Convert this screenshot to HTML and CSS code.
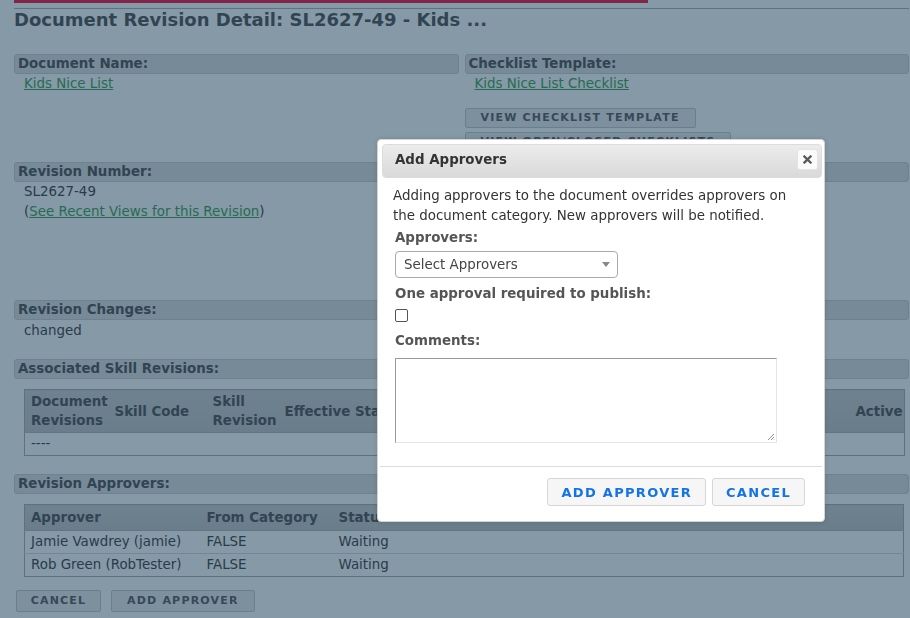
FILE: index.html
```html
<!DOCTYPE html>
<html>
<head>
<meta charset="utf-8">
<title>Document Revision Detail</title>
<link rel="stylesheet" href="styles.css">
</head>
<body>
<div class="page">
  <div class="topbar"><div class="accent"></div></div>
  <h1 class="title">Document Revision Detail: SL2627-49 - Kids ...</h1>

  <div class="grid">
    <div class="cell">
      <div class="bar">Document Name:</div>
      <div class="content"><a href="#">Kids Nice List</a></div>
    </div>
    <div class="cell">
      <div class="bar">Checklist Template:</div>
      <div class="content"><a href="#">Kids Nice List Checklist</a></div>
      <div class="btns-col">
        <button class="pbtn">View Checklist Template</button>
        <button class="pbtn">View Open/Closed Checklists</button>
      </div>
    </div>
    <div class="cell">
      <div class="bar">Revision Number:</div>
      <div class="content">SL2627-49<br>(<a href="#">See Recent Views for this Revision</a>)</div>
    </div>
    <div class="cell tall">
      <div class="bar">Revision Status:</div>
      <div class="content">Pending Approval<br>Created: 11/02/2023<br>Effective: 11/02/2023<br>Author: Jamie Vawdrey</div>
    </div>
  </div>

  <div class="section changes">
    <div class="bar">Revision Changes:</div>
    <div class="content">changed</div>
  </div>

  <div class="section">
    <div class="bar">Associated Skill Revisions:</div>
    <table class="tbl skills">
      <colgroup><col style="width:84px"><col style="width:98px"><col style="width:72px"><col style="width:190px"><col style="width:190px"><col style="width:191px"><col style="width:55px"></colgroup>
      <thead><tr><th>Document Revisions</th><th>Skill Code</th><th>Skill Revision</th><th>Effective Start</th><th>Effective End</th><th>Status</th><th>Active</th></tr></thead>
      <tbody><tr><td>----</td><td></td><td></td><td></td><td></td><td></td><td></td></tr></tbody>
    </table>
  </div>

  <div class="section">
    <div class="bar">Revision Approvers:</div>
    <table class="tbl approvers">
      <colgroup><col style="width:176px"><col style="width:132px"><col style="width:180px"><col></colgroup>
      <thead><tr><th>Approver</th><th>From Category</th><th>Status</th><th>Date</th></tr></thead>
      <tbody>
        <tr><td>Jamie Vawdrey (jamie)</td><td>FALSE</td><td>Waiting</td><td></td></tr>
        <tr><td>Rob Green (RobTester)</td><td>FALSE</td><td>Waiting</td><td></td></tr>
      </tbody>
    </table>
  </div>

  <div class="actions">
    <button class="pbtn">Cancel</button>
    <button class="pbtn">Add Approver</button>
  </div>
</div>

<div class="overlay"></div>

<div class="dialog">
  <div class="dlg-title">
    <span>Add Approvers</span>
    <button class="close" aria-label="close">
      <svg width="9" height="9" viewBox="0 0 9 9"><path d="M1.5 1.5 L7.5 7.5 M7.5 1.5 L1.5 7.5" stroke="#5a5a5a" stroke-width="2.3" stroke-linecap="square"/></svg>
    </button>
  </div>
  <div class="dlg-body">
    <p class="intro">Adding approvers to the document overrides approvers on the document category. New approvers will be notified.</p>
    <div class="form">
      <label class="lbl">Approvers:</label>
      <div class="select"><span>Select Approvers</span><span class="caret"></span></div>
      <label class="lbl">One approval required to publish:</label>
      <div class="check"></div>
      <label class="lbl">Comments:</label>
      <div class="textarea"><svg class="grip" width="8" height="8" viewBox="0 0 8 8"><path d="M7 1 L1 7 M7 4 L4 7 M7 6.5 L6.5 7" stroke="#777" stroke-width="0.8"/></svg></div>
    </div>
  </div>
  <div class="dlg-foot">
    <button class="dbtn">Add Approver</button>
    <button class="dbtn">Cancel</button>
  </div>
</div>
</body>
</html>
```
FILE: styles.css
```css
html, body { margin: 0; padding: 0; background: #fff; }
body {
  font-family: "DejaVu Sans", Verdana, sans-serif;
  font-size: 13.4px;
  color: #444;
  width: 910px;
  height: 618px;
  overflow: hidden;
}
a { color: #3fa254; text-decoration: underline; }

.page { padding: 0 1px 0 14px; }
.topbar { border-bottom: 1px solid #b0b0b0; height: 8px; }
.accent { width: 634px; height: 3px; background: #f31543; }
.title {
  margin: -1px 0 0;
  font-size: 18px;
  line-height: 24px;
  font-weight: bold;
  color: #555;
}

.grid {
  margin-top: 22px;
  display: grid;
  grid-template-columns: 1fr 1fr;
  column-gap: 6px;
  row-gap: 10px;
}
.cell.tall { min-height: 129px; }
.bar {
  height: 18px;
  line-height: 18px;
  border: 1px solid #cfcfcf;
  border-radius: 3px;
  background: #e0e0e0;
  padding-left: 3px;
  font-weight: bold;
  color: #555;
}
.content { padding-left: 10px; line-height: 20px; }
.btns-col { display: flex; flex-direction: column; align-items: flex-start; gap: 4px; margin-top: 14px; }

.pbtn {
  font-family: "DejaVu Sans", Verdana, sans-serif;
  font-size: 11px;
  font-weight: bold;
  text-transform: uppercase;
  letter-spacing: 1.2px;
  color: #5e5e5e;
  background: #ececec;
  border: 1px solid #c8c8c8;
  border-radius: 2px;
  height: 20px;
  padding: 0 15px;
  line-height: 18px;
}

.section { margin-top: 18px; }
.grid + .section { margin-top: 9px; }
.changes .content { padding-top: 1px; }

.tbl {
  margin: 10px 0 0 10px;
  width: 880px;
  table-layout: fixed;
  border-collapse: collapse;
  border: 1px solid #afafaf;
}
.tbl th {
  background: linear-gradient(#d0d0d0, #c6c6c6);
  text-align: left;
  font-weight: bold;
  color: #555;
  padding: 2px 1px 2px 6px;
  line-height: 19px;
  border-bottom: 1px solid #b8b8b8;
}
.tbl td { padding: 0 1px 0 6px; height: 22px; line-height: 20px; border-top: 1px solid #d8d8d8; }
.skills th { height: 35px; }
.approvers th { height: 21px; }

.actions { display: flex; gap: 10px; margin: 13px 0 0 2px; }
.actions .pbtn { height: 22px; padding: 0 15px; }
.actions .pbtn:first-child { width: 85px; padding: 0; }

.overlay {
  position: fixed;
  inset: 0;
  background: rgba(13, 51, 77, 0.5);
}

.dialog {
  position: fixed;
  left: 377px;
  top: 139px;
  width: 448px;
  height: 383px;
  box-sizing: border-box;
  background: #fff;
  border: 1px solid #d4d4d4;
  border-radius: 4px;
  padding: 4px 2px 0 4px;
  box-shadow: 0 0 4px rgba(0,0,0,0.15);
}
.dlg-title {
  height: 29px;
  display: flex;
  align-items: center;
  justify-content: space-between;
  padding: 0 3px 3px 12px;
  background: linear-gradient(#ececec, #d9d9d9);
  border: 1px solid #dcdcdc;
  border-radius: 4px;
  font-weight: bold;
  color: #333;
}
.close {
  width: 21px;
  height: 21px;
  padding: 0;
  border: 1px solid #e4e4e4;
  border-radius: 3px;
  background: #fbfbfb;
  display: flex;
  align-items: center;
  justify-content: center;
}
.dlg-body { padding: 8px 0 0 11px; }
.intro { margin: 0; line-height: 20px; color: #333; width: 400px; }
.form { padding-left: 2px; display: flex; flex-direction: column; align-items: flex-start; }
.lbl { display: block; font-weight: bold; color: #555; line-height: 20px; }
.form .lbl:first-child { margin-top: 2px; }
.select {
  margin-top: 3px;
  width: 223px;
  height: 27px;
  box-sizing: border-box;
  border: 1px solid #aaa;
  border-radius: 4px;
  display: flex;
  align-items: center;
  justify-content: space-between;
  padding: 0 8px;
  color: #444;
  margin-bottom: 6px;
}
.caret {
  width: 0; height: 0;
  border-left: 4px solid transparent;
  border-right: 4px solid transparent;
  border-top: 5px solid #888;
  margin-right: -1px;
}
.check {
  margin-top: 5px;
  width: 11px;
  height: 11px;
  border: 1px solid #555;
  border-radius: 2px;
  margin-bottom: 9px;
}
.textarea {
  margin-top: 7px;
  width: 382px;
  height: 85px;
  box-sizing: border-box;
  border: 1px solid #e4e4e4;
  border-top-color: #999;
  border-left-color: #999;
  position: relative;
}
.grip { position: absolute; right: 1px; bottom: 1px; }
.dlg-foot {
  margin: 23px 0 0 -2px;
  border-top: 1px solid #dcdcdc;
  padding: 11px 17px 0 0;
  display: flex;
  justify-content: flex-end;
  gap: 6px;
}
.dbtn {
  font-family: "DejaVu Sans", Verdana, sans-serif;
  font-size: 13px;
  font-weight: bold;
  text-transform: uppercase;
  letter-spacing: 1.3px;
  color: #1473e6;
  background: #f6f6f6;
  border: 1px solid #d6d6d6;
  border-radius: 3px;
  height: 28px;
  padding: 0 13px;
}
```
